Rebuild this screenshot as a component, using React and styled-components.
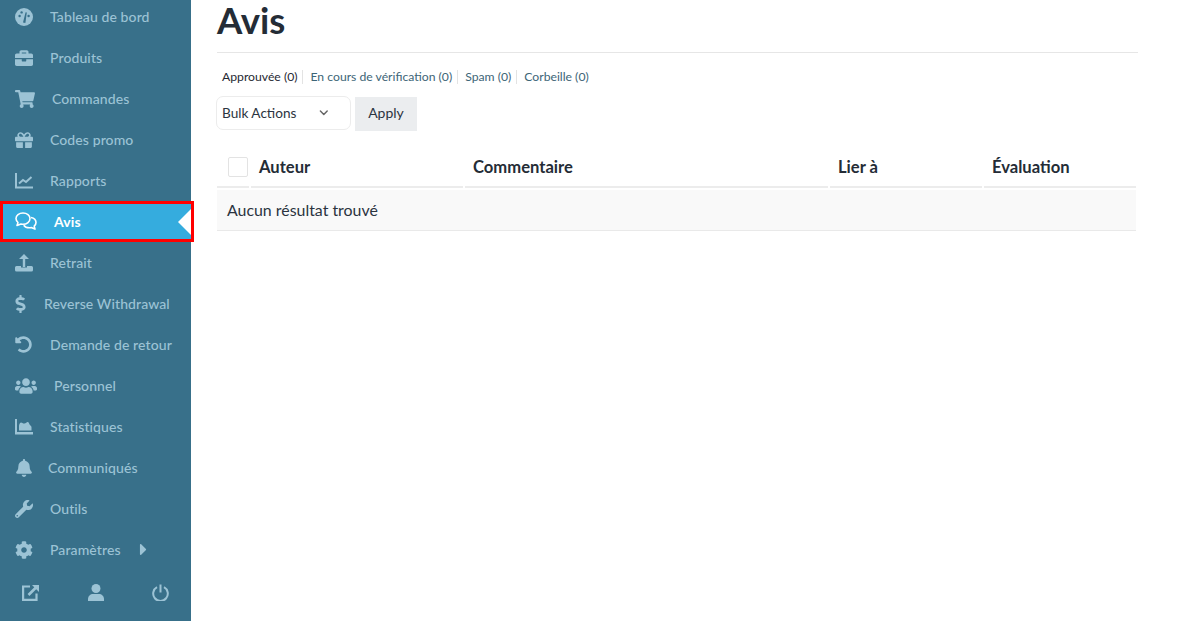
import React from 'react'
import styled, { createGlobalStyle } from 'styled-components'
import {
  FaBriefcase, FaShoppingCart, FaGift, FaDollarSign, FaUndoAlt, FaUsers, FaBell, FaWrench, FaCog, FaCaretRight,
} from 'react-icons/fa'
import { FiChevronDown } from 'react-icons/fi'

const GlobalStyle = createGlobalStyle`
  html, body { margin: 0; height: 100%; overflow: hidden; background: #fff; }
  body { font-family: "Lato", "Open Sans", sans-serif; color: #1f2933; }
  #root { height: 100%; }
`

const Page = styled.div`
  display: flex;
  height: 621px;
  overflow: hidden;
`

const Sidebar = styled.aside`
  width: 191px;
  flex: none;
  background: #38708a;
  display: flex;
  flex-direction: column;
`

const Menu = styled.nav`
  margin-top: -4px;
  display: flex;
  flex-direction: column;
`

const MenuRow = styled.a`
  position: relative;
  height: 41px;
  box-sizing: border-box;
  display: flex;
  align-items: center;
  padding-left: 15px;
  font-size: 14px;
  letter-spacing: 0.1px;
  font-weight: ${(p) => (p.$active ? 700 : 500)};
  color: ${(p) => (p.$active ? '#fff' : '#9cc3d5')};
  background: ${(p) => (p.$active ? '#35acde' : 'transparent')};
  ${(p) => p.$active && `
    width: 194px;
    outline: 3px solid #f00;
    outline-offset: -3px;
  `}
`

const IconSlot = styled.span`
  width: ${(p) => p.$width}px;
  flex: none;
  display: flex;
  align-items: center;
  font-size: ${(p) => p.$size || 18}px;
`

const DollarIcon = styled(FaDollarSign)`
  width: 11px;
  height: 18px;
`

const Notch = styled.span`
  position: absolute;
  right: 3px;
  top: 50%;
  margin-top: -13px;
  border-style: solid;
  border-width: 13px 13px 13px 0;
  border-color: transparent #fff transparent transparent;
`

const Caret = styled(FaCaretRight)`
  margin-left: 13px;
  font-size: 19px;
`

const FooterIcons = styled.div`
  display: flex;
  justify-content: space-between;
  align-items: center;
  padding: 14px 22px 0;
  color: #9cc3d5;
`

const Main = styled.main`
  flex: 1;
  padding-left: 26px;
`

const Content = styled.div`
  width: 921px;
`

const Title = styled.h1`
  margin: 0;
  height: 52px;
  line-height: 40px;
  font-size: 36.5px;
  font-weight: 700;
  color: #242c36;
  border-bottom: 1px solid #e6e6e6;
`

const StatusList = styled.div`
  display: flex;
  align-items: center;
  margin: 17px 0 0 5px;
  font-size: 12.2px;
  line-height: 14px;
`

const StatusLink = styled.a`
  color: ${(p) => (p.$current ? '#1f2933' : '#3d6577')};
  padding-right: 5px;
  margin-right: 7px;
  border-right: 1px solid #e3e3e3;
  &:last-child { border-right: 0; }
`

const Actions = styled.div`
  display: flex;
  align-items: flex-start;
  gap: 4px;
  margin-top: 12px;
  margin-left: -1px;
`

const BulkSelect = styled.div`
  width: 135px;
  height: 34px;
  box-sizing: border-box;
  border: 1px solid #ececec;
  border-radius: 7px;
  display: flex;
  align-items: center;
  justify-content: space-between;
  padding: 0 19px 0 5px;
  font-size: 13.6px;
  color: #2b3440;
  svg { color: #666; stroke-width: 2.6; }
`

const ApplyButton = styled.button`
  width: 62px;
  height: 34px;
  margin-top: 1px;
  border: 0;
  background: #ebedef;
  font: inherit;
  font-size: 14px;
  color: #2b3440;
  padding: 0 0 4px;
`

const Table = styled.div`
  width: 919px;
  margin-top: 18px;
`

const HeadRow = styled.div`
  display: grid;
  grid-template-columns: 32px 212px 363px 152px 1fr;
  gap: 2px;
`

const HeadCell = styled.div`
  height: 39px;
  box-sizing: border-box;
  border-bottom: 2px solid #ececec;
  display: flex;
  align-items: center;
  padding: 0 0 1px ${(p) => p.$pad ?? 8}px;
  font-size: 16.6px;
  font-weight: 700;
  color: #242c36;
`

const CheckBox = styled.span`
  width: 18px;
  height: 18px;
  border: 1px solid #e3e3e3;
  border-radius: 2px;
`

const EmptyRow = styled.div`
  margin-top: 2px;
  height: 41px;
  box-sizing: border-box;
  background: #f9f9f9;
  border-bottom: 1px solid #e9e9e9;
  display: flex;
  align-items: center;
  padding: 0 0 2px 10px;
  font-size: 15.9px;
  color: #2b3440;
`

const GaugeIcon = () => (
  <svg width="18" height="18" viewBox="0 0 18 18">
    <circle cx="9" cy="9" r="9" fill="currentColor" />
    <g fill="#38708a">
      <circle cx="4.6" cy="8" r="1.2" />
      <circle cx="6.6" cy="4.4" r="1.2" />
      <circle cx="13.6" cy="8" r="1.2" />
      <path d="M8 14.5 L10.6 4.2 L11.8 4.6 L10.4 15 Z" />
    </g>
  </svg>
)

const ChartLineIcon = () => (
  <svg width="18" height="16" viewBox="0 0 18 16" fill="none" stroke="currentColor">
    <path d="M1 0v14.5h17" strokeWidth="2" />
    <path d="M4 10.5 8 7l3 2 5.5-5" strokeWidth="2" />
  </svg>
)

const CommentsIcon = () => (
  <svg width="22" height="19" viewBox="0 0 22 19" fill="none" stroke="currentColor" strokeWidth="1.6" strokeLinejoin="round">
    <path d="M8 1C4 1 1 3.3 1 6.5c0 1.6.8 3 2 4l-1 3 4-1.5c.6.2 1.3.3 2 .3 4 0 7-2.6 7-5.8S12 1 8 1z" />
    <path d="M16 5.5c3 .6 5 2.6 5 5 0 1.4-.7 2.7-1.8 3.6l.8 3-3.8-1.5c-.6.1-1.2.2-1.8.2-2.5 0-4.6-1-5.7-2.6" />
  </svg>
)

const UploadIcon = () => (
  <svg width="18" height="18" viewBox="0 0 18 18">
    <path d="M1.500 12H6v1.500h6V12h4.500A1.500 1.500 0 0 1 18 13.500v2.500a1.500 1.500 0 0 1-1.500 1.500h-15A1.500 1.500 0 0 1 0 16v-2.500A1.500 1.500 0 0 1 1.500 12z" fill="currentColor" />
    <path d="M7.800 13V5H4l5-5 5 5h-3.800v8z" fill="currentColor" />
  </svg>
)

const ChartAreaIcon = () => (
  <svg width="18" height="16" viewBox="0 0 18 16">
    <path d="M0 0h2v13h16v2.500H0z" fill="currentColor" />
    <path d="M4 11.500V7c0-1 .6-3.500 2-3.500S8 5 9.500 4.500 12 2.500 13 3s1 2 2 3 1.500 1.500 1.500 2.500v3z" fill="currentColor" />
  </svg>
)

const ExternalIcon = () => (
  <svg width="18" height="17" viewBox="0 0 18 17" fill="none" stroke="currentColor" strokeWidth="2.200">
    <path d="M8 2.500H1.100v13.400h13.400V9.500" />
    <path d="M6.500 11 15 2.500" strokeWidth="2.600" />
    <path d="M10 1h7v7z" fill="currentColor" stroke="none" />
  </svg>
)

const PersonIcon = () => (
  <svg width="16" height="17" viewBox="0 0 16 17" fill="currentColor">
    <circle cx="8" cy="4.500" r="4.500" />
    <path d="M0 17v-2c0-3 2.500-5 5-5h6c2.500 0 5 2 5 5v2z" />
  </svg>
)

const PowerIcon = () => (
  <svg width="17" height="17" viewBox="0 0 17 17" fill="none" stroke="currentColor" strokeWidth="2">
    <path d="M5 3.200a7.300 7.300 0 1 0 7 0" />
    <path d="M8.500 0.500v8" />
  </svg>
)

const items = [
  { label: 'Tableau de bord', icon: GaugeIcon, slot: 35 },
  { label: 'Produits', icon: FaBriefcase, slot: 35 },
  { label: 'Commandes', icon: FaShoppingCart, slot: 37, size: 20 },
  { label: 'Codes promo', icon: FaGift, slot: 35 },
  { label: 'Rapports', icon: ChartLineIcon, slot: 35 },
  { label: 'Avis', icon: CommentsIcon, slot: 39, active: true },
  { label: 'Retrait', icon: UploadIcon, slot: 35 },
  { label: 'Reverse Withdrawal', icon: DollarIcon, slot: 29 },
  { label: 'Demande de retour', icon: FaUndoAlt, slot: 35, size: 17 },
  { label: 'Personnel', icon: FaUsers, slot: 39, size: 22 },
  { label: 'Statistiques', icon: ChartAreaIcon, slot: 35 },
  { label: 'Communiqués', icon: FaBell, slot: 33 },
  { label: 'Outils', icon: FaWrench, slot: 35 },
  { label: 'Paramètres', icon: FaCog, slot: 35, caret: true },
]

const statuses = [
  { label: 'Approuvée (0)', current: true },
  { label: 'En cours de vérification (0)' },
  { label: 'Spam (0)' },
  { label: 'Corbeille (0)' },
]

export default function App() {
  return (
    <Page>
      <GlobalStyle />
      <Sidebar>
        <Menu>
          {items.map(({ label, icon: Icon, slot, size, active, caret }) => (
            <MenuRow key={label} $active={active}>
              <IconSlot $width={slot} $size={size}><Icon /></IconSlot>
              {label}
              {caret && <Caret />}
              {active && <Notch />}
            </MenuRow>
          ))}
        </Menu>
        <FooterIcons>
          <ExternalIcon />
          <PersonIcon />
          <PowerIcon />
        </FooterIcons>
      </Sidebar>
      <Main>
        <Content>
          <Title>Avis</Title>
          <StatusList>
            {statuses.map((s) => (
              <StatusLink key={s.label} $current={s.current}>{s.label}</StatusLink>
            ))}
          </StatusList>
          <Actions>
            <BulkSelect>
              Bulk Actions
              <FiChevronDown />
            </BulkSelect>
            <ApplyButton>Apply</ApplyButton>
          </Actions>
          <Table>
            <HeadRow>
              <HeadCell $pad={11}><CheckBox /></HeadCell>
              <HeadCell>Auteur</HeadCell>
              <HeadCell>Commentaire</HeadCell>
              <HeadCell>Lier à</HeadCell>
              <HeadCell>Évaluation</HeadCell>
            </HeadRow>
            <EmptyRow>Aucun résultat trouvé</EmptyRow>
          </Table>
        </Content>
      </Main>
    </Page>
  )
}
